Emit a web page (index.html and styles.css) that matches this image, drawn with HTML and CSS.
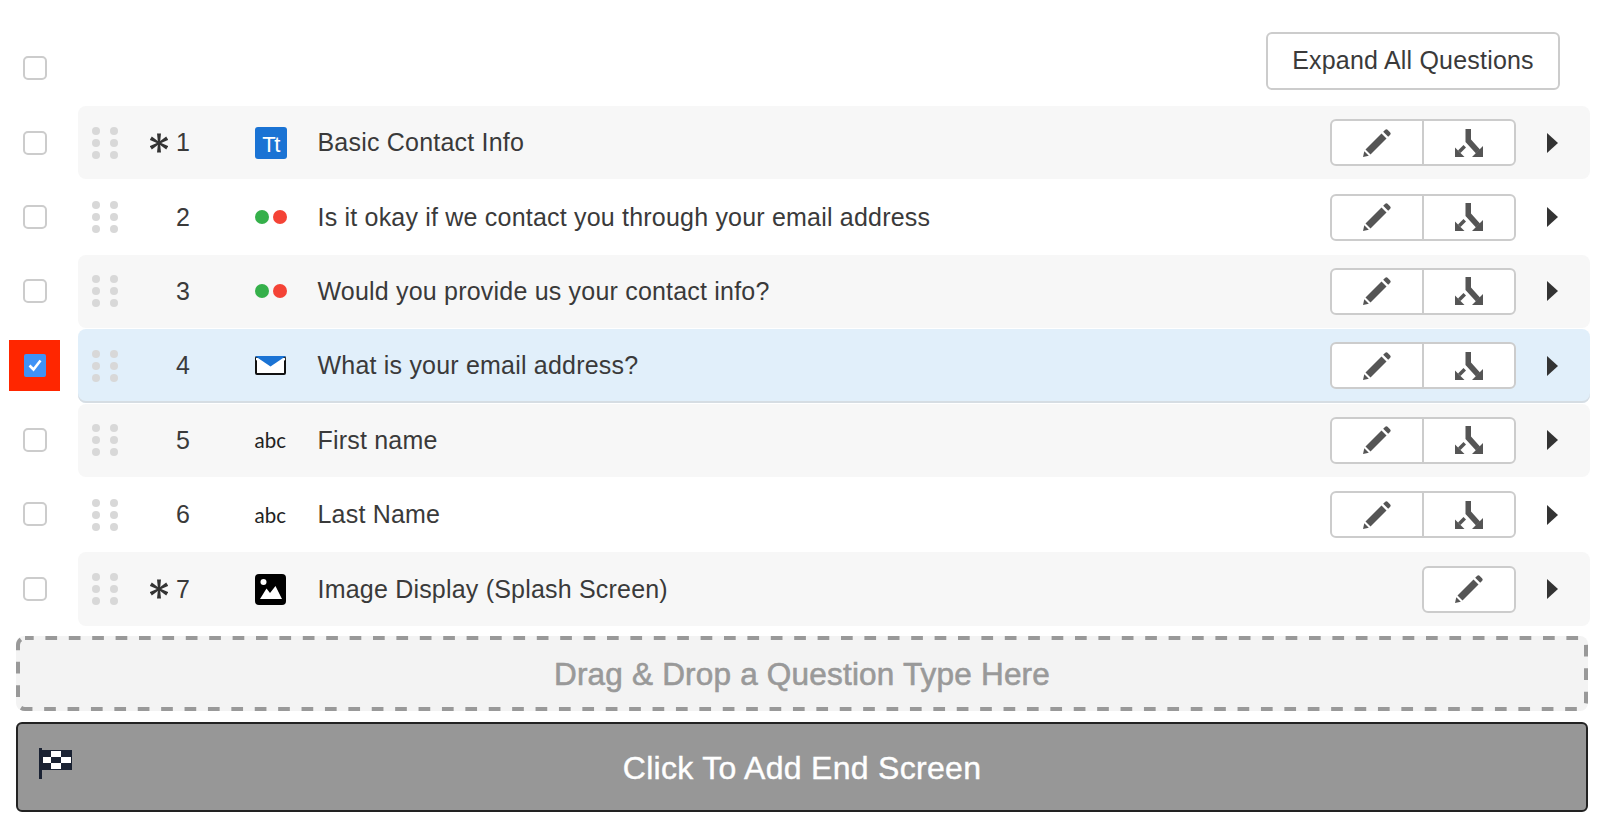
FILE: index.html
```html
<!DOCTYPE html>
<html>
    <head>
        <title>Questions</title>
        <meta charset="UTF-8">
        <link rel="stylesheet" href="styles.css">
    </head>
    <body>
        <svg class="defs" width="0" height="0">
            <symbol id="pencil" viewBox="0 0 28 28">
                <path d="M2.5 20.5 18.5 4.5 23.5 9.5 7.5 25.5Z"/>
                <path d="M1.3 22.2 5.8 26.7 0 28Z"/>
                <path d="M20.2 2.8 22 1a2 2 0 0 1 2.8 0L27 3.2a2 2 0 0 1 0 2.8L25.2 7.8Z"/>
            </symbol>
            <symbol id="branch" viewBox="0 0 28 28">
                <path d="M10.5 0H16V10.5L25 20.5 21 24.5 10.5 13Z"/>
                <path d="M28 17V28H17Z"/>
                <path d="M0 18.5 9.5 28H0Z"/>
                <path d="M3 21.5 8.5 16 11 18.5 5.5 24Z"/>
            </symbol>
            <symbol id="star" viewBox="0 0 18 20">
                <g fill="#333">
                    <path id="arm" d="M8 10 7 .5H11L10 10Z"/>
                    <use href="#arm" transform="rotate(60 9 10)"/>
                    <use href="#arm" transform="rotate(120 9 10)"/>
                    <use href="#arm" transform="rotate(180 9 10)"/>
                    <use href="#arm" transform="rotate(240 9 10)"/>
                    <use href="#arm" transform="rotate(300 9 10)"/>
                </g>
            </symbol>
            <symbol id="envelope" viewBox="0 0 31 19">
                <rect x="1" y="1" width="29" height="17" rx="1" fill="#fff" stroke="#111" stroke-width="2"/>
                <path d="M0 0H31L15.5 10.5Z" fill="#1a73d4"/>
                <path d="M0 1.5 15.5 11.5 31 1.5V4L15.5 13 0 4Z" fill="#fff" transform="translate(1 0) scale(.94 1)"/>
            </symbol>
            <symbol id="picture" viewBox="0 0 31 31">
                <rect width="31" height="31" rx="4" fill="#000"/>
                <circle cx="8.5" cy="8" r="3" fill="#fff"/>
                <path d="M5 25 11.5 14.5 15 19 20.5 12 27 25Z" fill="#fff"/>
            </symbol>
        </svg>

        <div class="page">
            <div class="toolbar">
                <div class="check-cell"><span class="box"></span></div>
                <a class="expand">Expand All Questions</a>
            </div>

            <div class="line">
                <div class="check-cell"><span class="box"></span></div>
                <div class="row shaded">
                    <div class="grip"><i></i><i></i><i></i><i></i><i></i><i></i></div>
                    <div class="num"><svg class="star"><use href="#star"/></svg>1</div>
                    <div class="type"><span class="tt">Tt</span></div>
                    <div class="title">Basic Contact Info</div>
                    <div class="actions">
                        <a class="act"><svg><use href="#pencil"/></svg></a>
                        <a class="act"><svg><use href="#branch"/></svg></a>
                    </div>
                    <span class="caret"></span>
                </div>
            </div>

            <div class="line">
                <div class="check-cell"><span class="box"></span></div>
                <div class="row">
                    <div class="grip"><i></i><i></i><i></i><i></i><i></i><i></i></div>
                    <div class="num">2</div>
                    <div class="type"><span class="dot green"></span><span class="dot red"></span></div>
                    <div class="title">Is it okay if we contact you through your email address</div>
                    <div class="actions">
                        <a class="act"><svg><use href="#pencil"/></svg></a>
                        <a class="act"><svg><use href="#branch"/></svg></a>
                    </div>
                    <span class="caret"></span>
                </div>
            </div>

            <div class="line">
                <div class="check-cell"><span class="box"></span></div>
                <div class="row shaded">
                    <div class="grip"><i></i><i></i><i></i><i></i><i></i><i></i></div>
                    <div class="num">3</div>
                    <div class="type"><span class="dot green"></span><span class="dot red"></span></div>
                    <div class="title">Would you provide us your contact info?</div>
                    <div class="actions">
                        <a class="act"><svg><use href="#pencil"/></svg></a>
                        <a class="act"><svg><use href="#branch"/></svg></a>
                    </div>
                    <span class="caret"></span>
                </div>
            </div>

            <div class="line">
                <div class="check-cell marked">
                    <span class="box checked">
                        <svg viewBox="0 0 22 22"><path d="M5.5 11.5 9.5 15.5 16.5 6.5" fill="none" stroke="#fff" stroke-width="2.6"/></svg>
                    </span>
                </div>
                <div class="row selected">
                    <div class="grip"><i></i><i></i><i></i><i></i><i></i><i></i></div>
                    <div class="num">4</div>
                    <div class="type"><svg class="mail"><use href="#envelope"/></svg></div>
                    <div class="title">What is your email address?</div>
                    <div class="actions">
                        <a class="act"><svg><use href="#pencil"/></svg></a>
                        <a class="act"><svg><use href="#branch"/></svg></a>
                    </div>
                    <span class="caret"></span>
                </div>
            </div>

            <div class="line">
                <div class="check-cell"><span class="box"></span></div>
                <div class="row shaded">
                    <div class="grip"><i></i><i></i><i></i><i></i><i></i><i></i></div>
                    <div class="num">5</div>
                    <div class="type"><span class="abc">abc</span></div>
                    <div class="title">First name</div>
                    <div class="actions">
                        <a class="act"><svg><use href="#pencil"/></svg></a>
                        <a class="act"><svg><use href="#branch"/></svg></a>
                    </div>
                    <span class="caret"></span>
                </div>
            </div>

            <div class="line">
                <div class="check-cell"><span class="box"></span></div>
                <div class="row">
                    <div class="grip"><i></i><i></i><i></i><i></i><i></i><i></i></div>
                    <div class="num">6</div>
                    <div class="type"><span class="abc">abc</span></div>
                    <div class="title">Last Name</div>
                    <div class="actions">
                        <a class="act"><svg><use href="#pencil"/></svg></a>
                        <a class="act"><svg><use href="#branch"/></svg></a>
                    </div>
                    <span class="caret"></span>
                </div>
            </div>

            <div class="line">
                <div class="check-cell"><span class="box"></span></div>
                <div class="row shaded">
                    <div class="grip"><i></i><i></i><i></i><i></i><i></i><i></i></div>
                    <div class="num"><svg class="star"><use href="#star"/></svg>7</div>
                    <div class="type"><svg class="pic"><use href="#picture"/></svg></div>
                    <div class="title">Image Display (Splash Screen)</div>
                    <div class="actions">
                        <a class="act"><svg><use href="#pencil"/></svg></a>
                    </div>
                    <span class="caret"></span>
                </div>
            </div>

            <div class="drop">
                <svg class="dashes" viewBox="0 0 1572 75">
                    <rect x="2" y="2" width="1568" height="71" rx="7"/>
                </svg>
                Drag &amp; Drop a Question Type Here
            </div>

            <div class="end-screen">
                <svg class="flag" viewBox="0 0 33 31">
                    <rect width="3" height="31" fill="#1a2233"/>
                    <rect x="3" y="2" width="30" height="20" fill="#1a2233"/>
                    <path d="M12 3H22V9H12ZM4 9H12V15H4ZM22 9H32V15H22ZM12 15H22V21H12Z" fill="#fff"/>
                </svg>
                Click To Add End Screen
            </div>
        </div>
    </body>
</html>
```

FILE: styles.css
```css
html, body {
    margin: 0;
    padding: 0;
    background-color: #fff;
    font-family: "Liberation Sans", Arial, sans-serif;
    color: #3a3a3a;
    overflow: hidden;
}
.defs {
    position: absolute;
}
.page {
    width: 1600px;
    height: 826px;
}
.toolbar {
    display: flex;
    justify-content: space-between;
    align-items: flex-start;
    height: 74px;
    padding: 32px 40px 0 0;
}
.toolbar .check-cell {
    margin-top: 10px;
}
.expand {
    display: block;
    box-sizing: border-box;
    width: 294px;
    height: 58px;
    line-height: 53px;
    text-align: center;
    font-size: 25px;
    letter-spacing: .2px;
    border: 2px solid #ccc;
    border-radius: 6px;
}

/* question rows */
.line {
    display: flex;
    height: 74.4px;
}
.check-cell {
    display: flex;
    align-items: center;
    justify-content: center;
    flex: none;
    width: 51px;
    height: 51px;
    margin: 11px 18px 0 9px;
}
.marked {
    background-color: #ff2600;
}
.box {
    display: block;
    box-sizing: border-box;
    width: 24px;
    height: 24px;
    margin-left: 1px;
    background-color: #fff;
    border: 2px solid #ccc;
    border-radius: 5px;
}
.checked {
    width: 22px;
    height: 23px;
    margin-left: 0;
    background-color: #3f92f5;
    border: 0;
    border-radius: 2px;
}
.checked svg {
    display: block;
    width: 22px;
    height: 22px;
}
.row {
    display: flex;
    align-items: center;
    box-sizing: border-box;
    width: 1512px;
    height: 73.4px;
    padding: 0 32px 0 14px;
    border-radius: 8px;
    font-size: 25px;
    letter-spacing: .2px;
}
.shaded {
    background-color: #f7f7f7;
}
.selected {
    background-color: #e1effa;
    box-shadow: inset 0 -2px 0 #d6dde3;
}
.grip {
    display: grid;
    grid-template-columns: 8px 8px;
    grid-auto-rows: 8px;
    gap: 4px 10px;
    flex: none;
}
.grip i {
    border-radius: 50%;
    background-color: #d8d8d8;
}
.num {
    display: flex;
    align-items: center;
    justify-content: flex-end;
    flex: none;
    width: 72px;
}
.star {
    width: 18px;
    height: 20px;
    margin-right: 8px;
}
.type {
    display: flex;
    align-items: center;
    justify-content: space-between;
    flex: none;
    width: 32px;
    margin-left: 64.5px;
}
.tt {
    display: block;
    width: 32px;
    height: 32px;
    line-height: 35px;
    text-align: center;
    font-size: 22px;
    color: #fff;
    background-color: #1a73d4;
    border-radius: 3px;
    letter-spacing: -1.5px;
}
.dot {
    width: 14px;
    height: 14px;
    border-radius: 50%;
}
.green {
    background-color: #35b04a;
}
.red {
    background-color: #f44336;
}
.mail {
    width: 31px;
    height: 19px;
}
.pic {
    width: 31px;
    height: 31px;
}
.abc {
    font-family: Lato, sans-serif;
    font-size: 20.5px;
    letter-spacing: 0;
    color: #222;
}
.title {
    margin-left: 31px;
}

/* edit + branch buttons */
.actions {
    display: flex;
    flex: none;
    margin-left: auto;
    box-sizing: border-box;
    height: 47px;
    background-color: #fff;
    border: 2px solid #ccc;
    border-radius: 6px;
}
.act {
    display: flex;
    align-items: center;
    justify-content: center;
    width: 90px;
}
.act + .act {
    border-left: 2px solid #ccc;
}
.act svg {
    width: 28px;
    height: 28px;
    fill: #555;
}
.caret {
    flex: none;
    width: 0;
    height: 0;
    margin-left: 31px;
    border-left: 11px solid #333;
    border-top: 10px solid transparent;
    border-bottom: 10px solid transparent;
}

/* bottom blocks */
.drop {
    position: relative;
    width: 1572px;
    height: 75px;
    margin: 9px 0 0 16px;
    line-height: 77px;
    text-align: center;
    font-size: 31.5px;
    letter-spacing: .2px;
    -webkit-text-stroke: .6px #999;
    color: #999;
    background-color: #f3f3f3;
    border-radius: 8px;
}
.dashes {
    position: absolute;
    left: 0;
    top: 0;
    width: 1572px;
    height: 75px;
}
.dashes rect {
    fill: none;
    stroke: #999;
    stroke-width: 4;
    stroke-dasharray: 11.7 11.7;
    stroke-dashoffset: 3;
}
.end-screen {
    position: relative;
    box-sizing: border-box;
    width: 1572px;
    height: 90px;
    margin: 11px 0 0 16px;
    line-height: 88px;
    text-align: center;
    font-size: 32px;
    letter-spacing: .3px;
    -webkit-text-stroke: .4px #fff;
    color: #fff;
    background-color: #979797;
    border: 2px solid #222;
    border-radius: 6px;
}
.flag {
    position: absolute;
    left: 21px;
    top: 24px;
    width: 33px;
    height: 31px;
}
```
